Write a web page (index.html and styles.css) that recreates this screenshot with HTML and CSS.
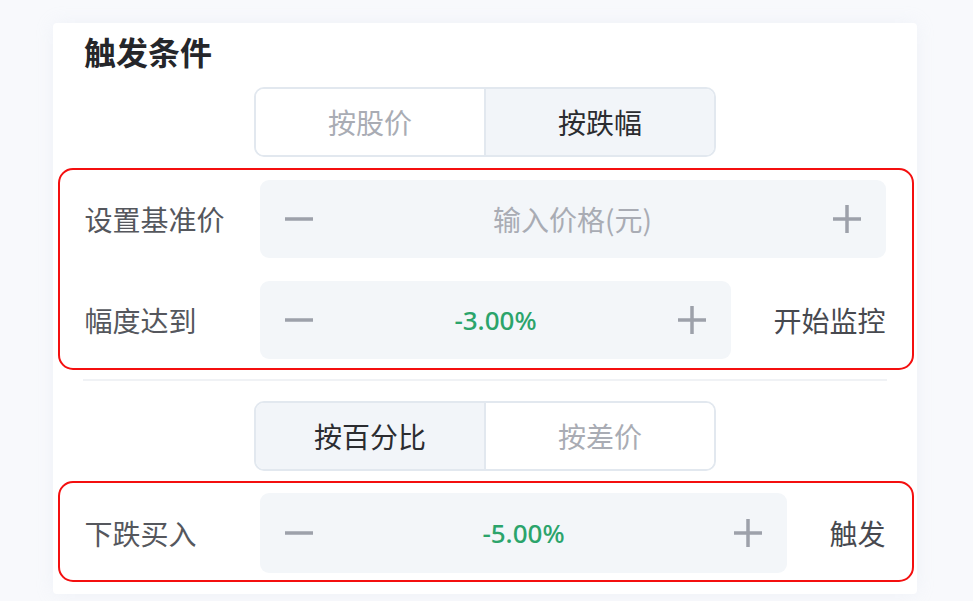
FILE: index.html
```html
<!DOCTYPE html>
<html lang="zh-CN">
<head>
<meta charset="utf-8">
<link rel="stylesheet" href="styles.css">
</head>
<body>
<div class="card">
  <h2 class="title">触发条件</h2>
  <div class="seg">
    <div class="seg-item">按股价</div>
    <div class="seg-item active">按跌幅</div>
  </div>
  <div class="box box1">
    <div class="row">
      <div class="label">设置基准价</div>
      <div class="stepper">
        <svg class="ico" viewBox="0 0 28 28"><path d="M0 14H28"/></svg>
        <span class="val placeholder">输入价格(元)</span>
        <svg class="ico" viewBox="0 0 28 28"><path d="M0 14H28M14 0V28"/></svg>
      </div>
    </div>
    <div class="row">
      <div class="label">幅度达到</div>
      <div class="stepper">
        <svg class="ico" viewBox="0 0 28 28"><path d="M0 14H28"/></svg>
        <span class="val green">-3.00%</span>
        <svg class="ico" viewBox="0 0 28 28"><path d="M0 14H28M14 0V28"/></svg>
      </div>
      <div class="suffix">开始监控</div>
    </div>
  </div>
  <div class="divider"></div>
  <div class="seg seg2">
    <div class="seg-item active">按百分比</div>
    <div class="seg-item">按差价</div>
  </div>
  <div class="box box2">
    <div class="row">
      <div class="label">下跌买入</div>
      <div class="stepper tall">
        <svg class="ico" viewBox="0 0 28 28"><path d="M0 14H28"/></svg>
        <span class="val green">-5.00%</span>
        <svg class="ico" viewBox="0 0 28 28"><path d="M0 14H28M14 0V28"/></svg>
      </div>
      <div class="suffix">触发</div>
    </div>
  </div>
</div>
</body>
</html>
```
FILE: styles.css
```css
* { box-sizing: border-box; }
html, body { margin: 0; padding: 0; }
body {
  background: #f8f9fc;
  font-family: "Noto Sans CJK SC", "Noto Sans", sans-serif;
  width: 973px;
  height: 601px;
  overflow: hidden;
  padding-top: 23px;
}
.card {
  margin-left: 53px;
  width: 864px;
  background: #ffffff;
  padding: 0 3px 12px 5px;
  box-shadow: 0 0 18px rgba(200, 210, 230, 0.18);
  border-radius: 4px;
}
.title {
  margin: 0;
  padding-left: 26px;
  font-size: 32px;
  font-weight: 700;
  line-height: 56px;
  color: #25262a;
}
.seg {
  display: flex;
  width: 462px;
  height: 70px;
  margin: 8px auto 0;
  border: 2px solid #e2e8ef;
  border-radius: 10px;
  overflow: hidden;
  position: relative;
  left: -1px;
}
.seg-item {
  flex: 1;
  display: flex;
  align-items: center;
  justify-content: center;
  font-size: 28px;
  color: #a9acb4;
  background: #ffffff;
}
.seg-item + .seg-item { border-left: 2px solid #e2e8ef; }
.seg-item.active {
  background: #f2f5f9;
  color: #2b2c30;
}
.box {
  border: 2.5px solid #f40f0f;
  border-radius: 15px;
  padding: 9.5px 26.5px 9.5px 24.5px;
}
.box1 {
  margin-top: 11px;
  display: flex;
  flex-direction: column;
  gap: 23px;
}
.box2 {
  margin-top: 10px;
  padding-bottom: 7px;
}
.row {
  display: flex;
  align-items: center;
}
.label {
  width: 175px;
  flex: none;
  font-size: 28px;
  color: #55575d;
}
.stepper {
  flex: 1;
  height: 78px;
  background: #f3f6f9;
  border-radius: 9px;
  display: flex;
  align-items: center;
  padding: 0 25px;
}
.stepper.tall { height: 80px; }
.ico {
  width: 28px;
  height: 28px;
  flex: none;
  stroke: #9da1aa;
  stroke-width: 3.5;
  fill: none;
}
.val {
  flex: 1;
  text-align: center;
}
.placeholder {
  color: #a9acb4;
  font-size: 28px;
}
.green {
  color: #2ba46b;
  font-family: "Noto Sans", "Noto Sans CJK SC", sans-serif;
  font-size: 26px;
  font-weight: 500;
}
.suffix {
  flex: none;
  margin-left: 42px;
  font-size: 28px;
  color: #47494f;
}
.divider {
  height: 2px;
  background: #f0f2f5;
  margin: 9px 27px 0 25px;
}
.seg2 { margin-top: 20px; }
```
